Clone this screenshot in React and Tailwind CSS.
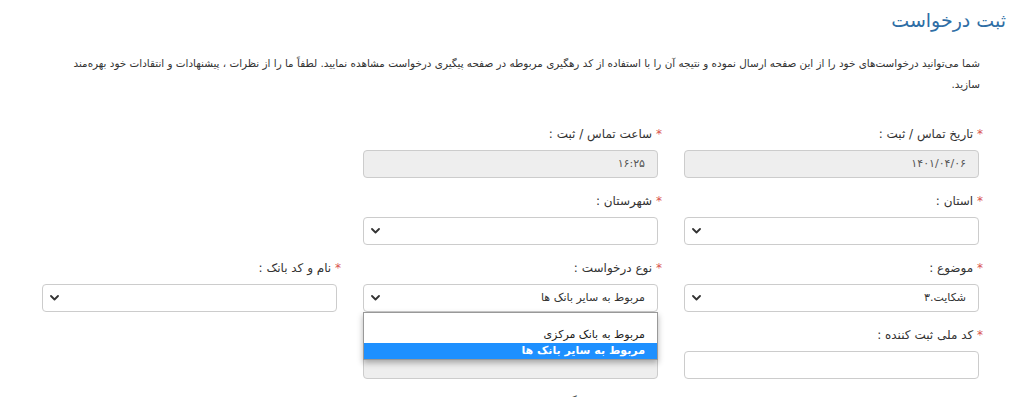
import React from 'react';

const Chevron = () => (
    <svg width="9" height="6" viewBox="0 0 9 6" className="shrink-0">
        <path d="M1 1 L4.5 4.5 L8 1" fill="none" stroke="#333" strokeWidth="1.8" strokeLinecap="round" strokeLinejoin="round" />
    </svg>
);

const Label = ({ text, required = true }) => (
    <div className="h-[18px] leading-[18px] mb-[7px] text-[12px] text-[#333] -mr-[4px]">
        {required && <span className="text-[#d9534f]">* </span>}{text}
    </div>
);

const Input = ({ value, disabled }) => (
    <div className={`h-[28px] rounded-[4px] border border-[#ccc] px-[12px] flex items-center text-[11px] text-[#555] ${disabled ? 'bg-[#eee]' : 'bg-white'}`}>
        {value}
    </div>
);

const Select = ({ value }) => (
    <div className="h-[28px] rounded-[4px] border border-[#ccc] bg-white pr-[12px] pl-[7px] flex items-center justify-between text-[11px] text-[#333]">
        <span>{value}</span>
        <Chevron />
    </div>
);

const Field = ({ label, required, children }) => (
    <div className="mb-[14px]">
        <Label text={label} required={required} />
        {children}
    </div>
);

const App = () => {
    return (
        <div dir="rtl" className="w-[1024px] h-[397px] overflow-hidden bg-white" style={{ fontFamily: '"DejaVu Sans", sans-serif' }}>
            <div className="pr-[18px] pt-[8px]">
                <h1 className="text-[19px] leading-[25px] text-[#2f6ea5]">ثبت درخواست</h1>
            </div>
            <div className="pr-[44px] pl-[42px]">
                <p className="mt-[20px] text-[10.4px] leading-[21px] text-[#333]">
                    شما می‌توانید درخواست‌های خود را از این صفحه ارسال نموده و نتیجه آن را با استفاده از کد رهگیری مربوطه در صفحه پیگیری درخواست مشاهده نمایید. لطفاً ما را از نظرات ، پیشنهادات و انتقادات خود بهره‌مند سازید.
                </p>
                <div className="mt-[30px] grid grid-cols-3 gap-x-[26px] pr-[1px]">
                    <div>
                        <Field label="تاریخ تماس / ثبت :"><Input value="۱۴۰۱/۰۴/۰۶" disabled /></Field>
                        <Field label="استان :"><Select value="" /></Field>
                        <Field label="موضوع :">
                            <Select value={<span dir="ltr" className="inline-flex"><span>۳.</span><span>شکایت</span></span>} />
                        </Field>
                        <Field label="کد ملی ثبت کننده :"><Input value="" /></Field>
                        <Field label="تلفن همراه :"><Input value="" /></Field>
                    </div>
                    <div>
                        <Field label="ساعت تماس / ثبت :"><Input value="۱۶:۲۵" disabled /></Field>
                        <Field label="شهرستان :"><Select value="" /></Field>
                        <div className="relative">
                            <Field label="نوع درخواست :"><Select value="مربوط به سایر بانک ها" /></Field>
                            <div className="absolute top-[53px] left-0 right-0 z-10 bg-white border border-[#999] shadow-[0_3px_6px_rgba(0,0,0,0.3)] text-[11px] text-[#222]">
                                <div className="h-[14px]" />
                                <div className="h-[16px] leading-[16px] pr-[12px]">مربوط به بانک مرکزی</div>
                                <div className="h-[16px] leading-[16px] pr-[12px] bg-[#1e90ff] text-white font-bold">مربوط به سایر بانک ها</div>
                            </div>
                        </div>
                        <Field label="" required={false}><Input value="" disabled /></Field>
                        <Field label="نام و نام خانوادگی :"><Input value="" /></Field>
                    </div>
                    <div>
                        <div className="h-[134px]" />
                        <Field label="نام و کد بانک :"><Select value="" /></Field>
                    </div>
                </div>
            </div>
        </div>
    );
};

export default App;
